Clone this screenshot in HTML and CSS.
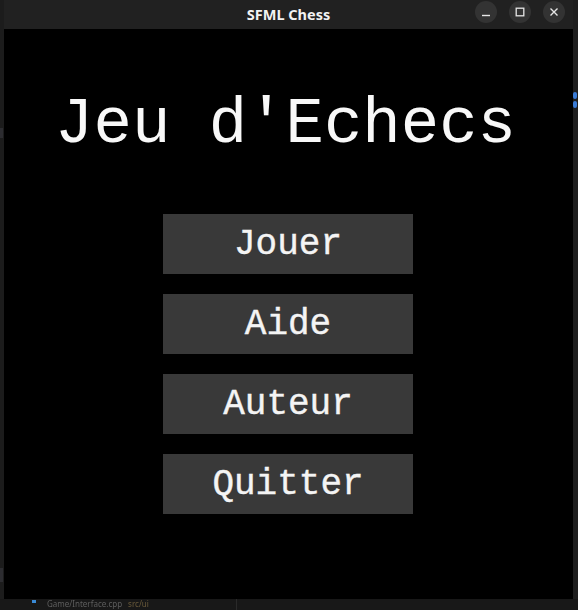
FILE: index.html
```html
<!DOCTYPE html>
<html lang="fr">
<head>
<meta charset="utf-8">
<title>SFML Chess</title>
<link rel="stylesheet" href="styles.css">
</head>
<body>
<div class="desktop">
  <div class="side-left"><span class="tick tick-a"></span><span class="tick tick-b"></span></div>
  <div class="window">
    <header class="titlebar">
      <span class="title">SFML Chess</span>
      <div class="controls">
        <span class="ctl"><svg width="22" height="22" viewBox="0 0 22 22"><line x1="7" y1="14.5" x2="15" y2="14.5" stroke="#e6e6e6" stroke-width="1.4"/></svg></span>
        <span class="ctl"><svg width="22" height="22" viewBox="0 0 22 22"><rect x="7.2" y="7.2" width="7.6" height="7.6" fill="none" stroke="#e6e6e6" stroke-width="1.3"/></svg></span>
        <span class="ctl"><svg width="22" height="22" viewBox="0 0 22 22"><path d="M7.5 7.5 L14.5 14.5 M14.5 7.5 L7.5 14.5" stroke="#e6e6e6" stroke-width="1.4"/></svg></span>
      </div>
    </header>
    <main class="content">
      <h1 class="heading">Jeu d'Echecs</h1>
      <nav class="menu">
        <div class="btn">Jouer</div>
        <div class="btn">Aide</div>
        <div class="btn">Auteur</div>
        <div class="btn">Quitter</div>
      </nav>
    </main>
  </div>
  <div class="side-right"><span class="blue b1"></span><span class="blue b2"></span></div>
</div>
<div class="below">
  <span class="file-icon"></span><span class="blur-text">Game/Interface.cpp</span><span class="blur-text dim">src/ui</span>
  <span class="divider"></span>
</div>
</body>
</html>
```

FILE: styles.css
```css
html, body {
  margin: 0;
  padding: 0;
  width: 578px;
  height: 610px;
  overflow: hidden;
  background: #181818;
}

.desktop {
  display: flex;
  height: 599px;
}

.side-left {
  width: 4px;
  background: #1c1c1c;
  position: relative;
}
.tick {
  position: absolute;
  left: 0;
  width: 3px;
  background: #2c2c30;
}
.tick-a { top: 128px; height: 10px; }
.tick-b { top: 568px; height: 14px; }

.window {
  width: 569px;
  display: flex;
  flex-direction: column;
  background: #000;
}

.titlebar {
  height: 29px;
  background: #212121;
  position: relative;
  display: flex;
  align-items: center;
  justify-content: center;
}
.title {
  font-family: "Noto Sans", "DejaVu Sans", sans-serif;
  font-weight: 700;
  font-size: 14.5px;
  color: #f2f2f2;
  line-height: 1;
  margin-top: -1px;
}
.controls {
  position: absolute;
  right: 8px;
  top: 0;
  height: 23px;
  display: flex;
  gap: 12px;
  align-items: center;
}
.ctl {
  width: 22px;
  height: 22px;
  border-radius: 50%;
  background: #333333;
  display: block;
}
.ctl svg { display: block; }

.content {
  flex: 1;
  display: flex;
  flex-direction: column;
  align-items: center;
}

.heading {
  margin: 64px 6px 0 0;
  font-family: "Liberation Mono", "DejaVu Sans Mono", monospace;
  font-weight: 400;
  font-size: 64px;
  line-height: 65px;
  color: #f8f8f8;
  text-align: center;
  white-space: pre;
}

.menu {
  margin: 56px 1px 0 0;
  display: flex;
  flex-direction: column;
  gap: 20px;
}

.btn {
  width: 250px;
  height: 60px;
  background: #393939;
  color: #f4f4f4;
  font-family: "Liberation Mono", "DejaVu Sans Mono", monospace;
  font-size: 36px;
  line-height: 62px;
  text-align: center;
  -webkit-text-stroke: 0.4px #f4f4f4;
}

.side-right {
  width: 5px;
  background: #1e1e1e;
  position: relative;
}
.blue {
  position: absolute;
  left: 0;
  width: 4px;
  height: 7px;
  background: #3a7bd5;
  border-radius: 2px;
}
.b1 { top: 92px; }
.b2 { top: 101px; }

.below {
  height: 11px;
  background: #181818;
  position: relative;
  display: flex;
  align-items: flex-start;
  overflow: hidden;
}
.file-icon {
  width: 4px;
  height: 3px;
  background: #3a8ad5;
  margin: 1px 0 0 32px;
}
.blur-text {
  font-family: "Noto Sans", sans-serif;
  font-size: 8px;
  line-height: 9px;
  margin-top: 0;
  margin-left: 11px;
  color: #5e5e5e;
  filter: blur(0.5px);
}
.blur-text.dim { color: #6a5a3a; margin-left: 6px; }
.divider {
  position: absolute;
  left: 236px;
  top: 0;
  width: 1px;
  height: 11px;
  background: #2a2a2a;
}
```
